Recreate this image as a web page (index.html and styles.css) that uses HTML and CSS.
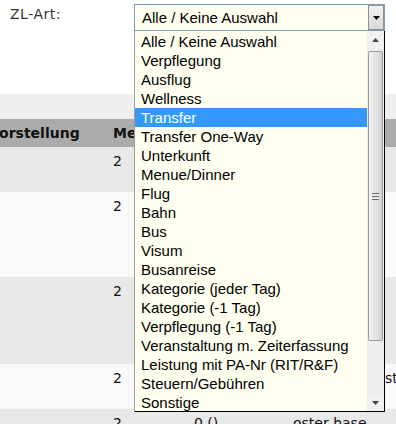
FILE: index.html
```html
<!DOCTYPE html>
<html lang="de">
<head>
<meta charset="utf-8">
<title>ZL-Art</title>
<link rel="stylesheet" href="styles.css">
</head>
<body>
<div class="page">
  <div class="filter">
    <label class="filter-label">ZL-Art:</label>
    <div class="combo">
      <div class="combo-field">
        <span class="combo-value">Alle / Keine Auswahl</span>
        <span class="combo-btn"><svg width="7" height="4" viewBox="0 0 7 4"><path d="M0 0H7L3.5 4Z" fill="#000"/></svg></span>
      </div>
      <div class="combo-list">
        <ul class="combo-options">
          <li>Alle / Keine Auswahl</li>
          <li>Verpflegung</li>
          <li>Ausflug</li>
          <li>Wellness</li>
          <li class="selected">Transfer</li>
          <li>Transfer One-Way</li>
          <li>Unterkunft</li>
          <li>Menue/Dinner</li>
          <li>Flug</li>
          <li>Bahn</li>
          <li>Bus</li>
          <li>Visum</li>
          <li>Busanreise</li>
          <li>Kategorie (jeder Tag)</li>
          <li>Kategorie (-1 Tag)</li>
          <li>Verpflegung (-1 Tag)</li>
          <li>Veranstaltung m. Zeiterfassung</li>
          <li>Leistung mit PA-Nr (RIT/R&amp;F)</li>
          <li>Steuern/Gebühren</li>
          <li>Sonstige</li>
        </ul>
        <div class="scrollbar">
          <div class="sb-btn"><svg width="7" height="4" viewBox="0 0 7 4"><path d="M0 4H7L3.5 0Z" fill="#444"/></svg></div>
          <div class="sb-track">
            <div class="sb-thumb"><span class="grip"></span></div>
          </div>
          <div class="sb-btn"><svg width="7" height="4" viewBox="0 0 7 4"><path d="M0 0H7L3.5 4Z" fill="#444"/></svg></div>
        </div>
      </div>
    </div>
  </div>
  <div class="band"></div>
  <div class="table-wrap">
    <table class="grid">
      <colgroup><col class="c1"><col class="c2"><col class="c3"><col class="c4"></colgroup>
      <thead>
        <tr class="head"><th>Vorstellung</th><th>Menge</th><th>Preis</th><th>Kunde</th></tr>
      </thead>
      <tbody>
        <tr class="odd h45"><td></td><td>2</td><td>0 ()</td><td>oster hase</td></tr>
        <tr class="even h85"><td></td><td>2</td><td>0 ()</td><td>oster hase</td></tr>
        <tr class="odd h87"><td></td><td>2</td><td>0 ()</td><td>oster hase</td></tr>
        <tr class="even h45"><td></td><td>2</td><td>0 ()</td><td>oster hase test</td></tr>
        <tr class="odd h45"><td></td><td>2</td><td>0 ()</td><td>oster hase</td></tr>
      </tbody>
    </table>
  </div>
</div>
</body>
</html>
```
FILE: styles.css
```css
html, body {
  margin: 0;
  padding: 0;
  background: #ffffff;
  overflow: hidden;
}
.page {
  width: 396px;
  height: 424px;
  overflow: hidden;
  font-family: "DejaVu Sans", Verdana, sans-serif;
}
.filter {
  height: 94px;
  display: flex;
  align-items: flex-start;
  background: #ffffff;
}
.filter-label {
  flex: 0 0 134px;
  box-sizing: border-box;
  padding: 6px 0 0 10px;
  font-size: 14px;
  line-height: 17px;
  letter-spacing: 0.5px;
  color: #333333;
}
.combo {
  position: relative;
  margin-top: 4px;
  width: 251px;
  font-family: "Liberation Sans", Arial, sans-serif;
  font-size: 15px;
  z-index: 2;
}
.combo-field {
  box-sizing: border-box;
  height: 27px;
  border: 1px solid #7f9db9;
  background: #fffff0;
  display: flex;
  align-items: stretch;
}
.combo-value {
  flex: 1;
  padding-left: 7px;
  line-height: 25px;
  color: #000;
}
.combo-btn {
  box-sizing: border-box;
  width: 16px;
  border: 1px solid #8e8f8f;
  background: linear-gradient(to bottom, #f2f2f2, #d8d8d8);
  display: flex;
  align-items: center;
  justify-content: center;
}
.combo-list {
  position: absolute;
  top: 100%;
  left: 0;
  width: 251px;
  height: 381px;
  box-sizing: border-box;
  background: #fffff0;
  border-left: 1px solid #a0a0a0;
  border-right: 1px solid #000;
  border-bottom: 1px solid #000;
  display: flex;
  overflow: hidden;
}
.combo-options {
  flex: 1;
  list-style: none;
  margin: 0;
  padding: 1px 0 0 0;
}
.combo-options li {
  height: 19px;
  line-height: 19px;
  padding-left: 6px;
  color: #000;
  white-space: nowrap;
}
.combo-options li.selected {
  background: #3399ff;
  color: #ffffff;
}
.scrollbar {
  flex: 0 0 17px;
  display: flex;
  flex-direction: column;
  background: #ededed;
}
.sb-btn {
  height: 17px;
  display: flex;
  align-items: center;
  justify-content: center;
  background: #f0f0f0;
}
.sb-track {
  flex: 1;
  display: flex;
  flex-direction: column;
  padding: 3px 1px 0 1px;
}
.sb-thumb {
  box-sizing: border-box;
  height: 290px;
  border: 1px solid #9b9b9b;
  border-radius: 2px;
  background: linear-gradient(to right, #f3f3f3, #e2e2e2 60%, #cfcfcf);
  display: flex;
  align-items: center;
  justify-content: center;
}
.grip {
  width: 7px;
  height: 7px;
  background: repeating-linear-gradient(to bottom, #6b6b6b 0, #6b6b6b 1px, #e8e8e8 1px, #e8e8e8 3px);
}
.band {
  height: 25px;
  background: #efefef;
}
.table-wrap {
  margin-left: -16px;
}
.grid {
  border-collapse: collapse;
  table-layout: fixed;
  width: 454px;
  font-size: 14px;
  color: #111;
}
.c1 { width: 124px; }
.c2 { width: 81px; }
.c3 { width: 99px; }
.c4 { width: 150px; }
.grid th,
.grid td {
  padding: 0 0 0 5px;
  text-align: left;
  white-space: nowrap;
  overflow: hidden;
}
.head {
  height: 28px;
  background: #ababab;
}
.head th {
  font-weight: bold;
  vertical-align: middle;
}
.grid td {
  vertical-align: top;
  padding-top: 6px;
}
.odd { background: #e8e8e8; }
.even { background: #f9f9f9; }
.h45 { height: 45px; }
.h85 { height: 85px; }
.h87 { height: 87px; }
```
